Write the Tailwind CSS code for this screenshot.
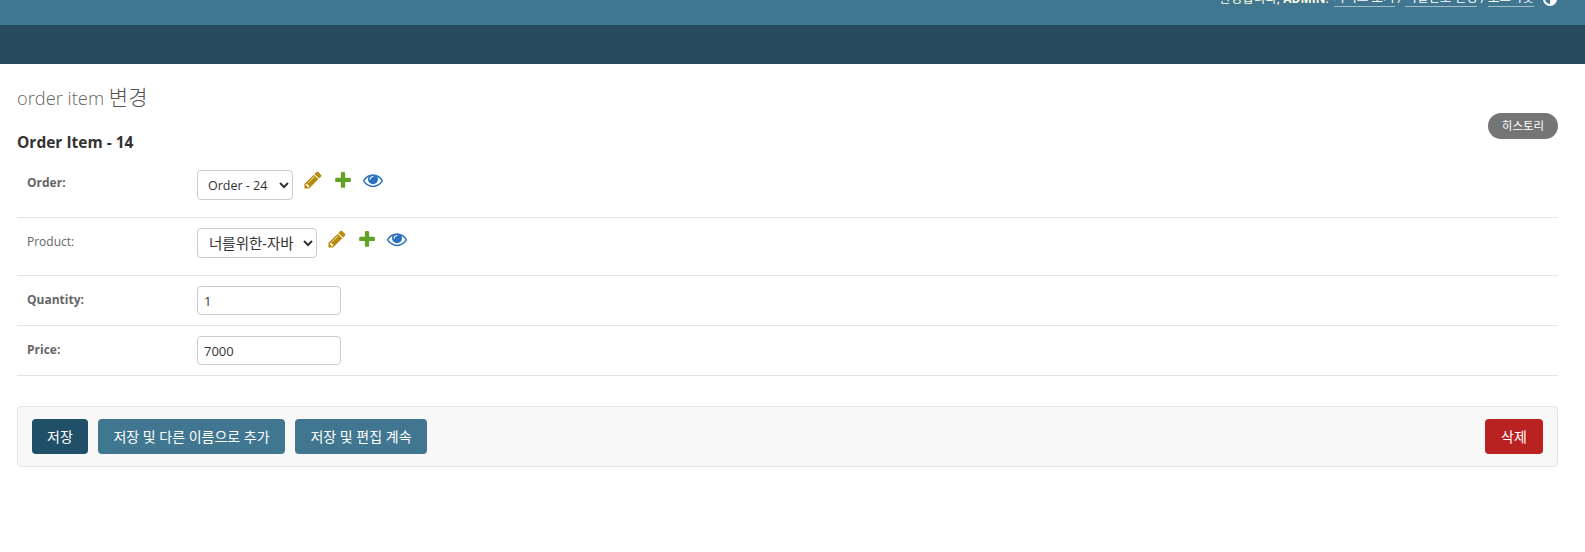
<!DOCTYPE html>
<html lang="ko">
  <head>
    <meta charset="UTF-8" />
    <title>order item 변경</title>
    <script src="https://cdn.jsdelivr.net/npm/@tailwindcss/browser@4"></script>
  </head>
  <body class="bg-white font-['Open_Sans','Noto_Sans_CJK_KR',sans-serif] text-[13px] text-[#333]">
    <!-- header -->
    <div class="h-[25px] bg-[#417690] overflow-hidden flex justify-end items-end pb-[18px] pr-[28px] text-[12.5px] leading-[16px] text-[#fdfbe0]">
      <div class="flex items-end">
        <span>환영합니다, <strong class="font-bold text-[12px]">ADMIN</strong>.</span>
        <a class="ml-[5px] text-white border-b border-white/50">사이트 보기</a>
        <span class="mx-[3px] text-white">/</span>
        <a class="text-white border-b border-white/50">비밀번호 변경</a>
        <span class="mx-[3px] text-white">/</span>
        <a class="text-white border-b border-white/50">로그아웃</a>
        <span class="ml-[9px] mb-[1px] w-[14px] h-[14px] rounded-full border-2 border-white bg-[linear-gradient(90deg,#417690_50%,#fff_50%)]"></span>
      </div>
    </div>
    <div class="h-[39px] bg-[#264b5d]"></div>

    <div class="pl-[17px] pr-[27px]">
      <div class="flex justify-between items-start">
        <div class="pb-[9px]">
          <h1 class="mt-[20px] h-[28px] text-[18.3px] leading-[28px] font-light text-[#666]">order item <span class="text-[21px] leading-none text-[#555]">변경</span></h1>
          <h2 class="mt-[20px] text-[15.5px] leading-[20px] font-bold text-[#333]">Order Item - 14</h2>
        </div>
        <a class="mt-[49px] h-[26px] w-[70px] rounded-full bg-[#757575] text-white text-[11.5px] flex items-center justify-center">히스토리</a>
      </div>

      <!-- form rows -->
      <div class="flex border-b border-[#e5e5e5] pt-[9px] h-[57px]">
        <label class="w-[180px] pl-[10px] pt-[3px] font-bold text-[12px] leading-[20px] text-[#666]">Order:</label>
        <select class="w-[96px] h-[30px] pl-[6px] bg-white border border-[#ccc] rounded text-[12.5px] text-[#333]">
          <option>Order - 24</option>
        </select>
        <div class="flex gap-[10px] h-[20px] ml-[10px] items-center">
          <svg class="w-[20px] h-[20px]" viewBox="0 0 1792 1792"><path fill="#b98b0c" d="M491 1536l91-91-235-235-91 91v107h128v128h107zm523-928q0-22-22-22-10 0-17 7l-542 542q-7 7-7 17 0 22 22 22 10 0 17-7l542-542q7-7 7-17zm-54-192l416 416-832 832h-416v-416zm683 96q0 53-37 90l-166 166-416-416 166-165q36-38 90-38 53 0 91 38l235 234q37 39 37 91z"/></svg>
          <svg class="w-[20px] h-[20px]" viewBox="0 0 1792 1792"><path fill="#5fa225" d="M1600 796v192q0 40-28 68t-68 28h-416v416q0 40-28 68t-68 28h-192q-40 0-68-28t-28-68v-416h-416q-40 0-68-28t-28-68v-192q0-40 28-68t68-28h416v-416q0-40 28-68t68-28h192q40 0 68 28t28 68v416h416q40 0 68 28t28 68z"/></svg>
          <svg class="w-[20px] h-[20px]" viewBox="0 0 1792 1792"><path fill="#2b70bf" d="M1664 960q-152-236-381-353 61 104 61 225 0 185-131.500 316.500t-316.500 131.500-316.500-131.500-131.500-316.500q0-121 61-225-229 117-381 353 133 205 333.500 326.500t434.500 121.500 434.500-121.500 333.500-326.500zm-720-384q0-20-14-34t-34-14q-125 0-214.500 89.500t-89.500 214.500q0 20 14 34t34 14 34-14 14-34q0-86 61-147t147-61q20 0 34-14t14-34zm848 384q0 34-20 69-140 230-376.500 368.500t-499.500 138.500-499.500-139-376.500-368q-20-35-20-69t20-69q140-229 376.500-368t499.500-139 499.500 139 376.500 368q20 35 20 69z"/></svg>
        </div>
      </div>
      <div class="flex border-b border-[#e5e5e5] pt-[10px] h-[58px]">
        <label class="w-[180px] pl-[10px] pt-[4px] text-[12px] leading-[20px] text-[#666]">Product:</label>
        <select class="w-[120px] h-[30px] pl-[7px] bg-white border border-[#ccc] rounded text-[14.5px] text-[#333]">
          <option>너를위한-자바</option>
        </select>
        <div class="flex gap-[10px] h-[20px] mt-[1px] ml-[10px] items-center">
          <svg class="w-[20px] h-[20px]" viewBox="0 0 1792 1792"><path fill="#b98b0c" d="M491 1536l91-91-235-235-91 91v107h128v128h107zm523-928q0-22-22-22-10 0-17 7l-542 542q-7 7-7 17 0 22 22 22 10 0 17-7l542-542q7-7 7-17zm-54-192l416 416-832 832h-416v-416zm683 96q0 53-37 90l-166 166-416-416 166-165q36-38 90-38 53 0 91 38l235 234q37 39 37 91z"/></svg>
          <svg class="w-[20px] h-[20px]" viewBox="0 0 1792 1792"><path fill="#5fa225" d="M1600 796v192q0 40-28 68t-68 28h-416v416q0 40-28 68t-68 28h-192q-40 0-68-28t-28-68v-416h-416q-40 0-68-28t-28-68v-192q0-40 28-68t68-28h416v-416q0-40 28-68t68-28h192q40 0 68 28t28 68v416h416q40 0 68 28t28 68z"/></svg>
          <svg class="w-[20px] h-[20px]" viewBox="0 0 1792 1792"><path fill="#2b70bf" d="M1664 960q-152-236-381-353 61 104 61 225 0 185-131.500 316.500t-316.500 131.500-316.500-131.500-131.500-316.500q0-121 61-225-229 117-381 353 133 205 333.500 326.500t434.500 121.500 434.500-121.500 333.500-326.500zm-720-384q0-20-14-34t-34-14q-125 0-214.500 89.500t-89.500 214.500q0 20 14 34t34 14 34-14 14-34q0-86 61-147t147-61q20 0 34-14t14-34zm848 384q0 34-20 69-140 230-376.500 368.500t-499.500 138.500-499.500-139-376.500-368q-20-35-20-69t20-69q140-229 376.500-368t499.500-139 499.500 139 376.500 368q20 35 20 69z"/></svg>
        </div>
      </div>
      <div class="flex border-b border-[#e5e5e5] pt-[10px] h-[50px]">
        <label class="w-[180px] pl-[10px] pt-[4px] font-bold text-[12px] leading-[20px] text-[#666]">Quantity:</label>
        <input value="1" class="w-[144px] h-[29px] px-[6px] border border-[#ccc] rounded text-[13px] text-[#333]" />
      </div>
      <div class="flex border-b border-[#e5e5e5] pt-[10px] h-[50px]">
        <label class="w-[180px] pl-[10px] pt-[4px] font-bold text-[12px] leading-[20px] text-[#666]">Price:</label>
        <input value="7000" class="w-[144px] h-[29px] px-[6px] border border-[#ccc] rounded text-[13px] text-[#333]" />
      </div>

      <!-- submit row -->
      <div class="mt-[30px] h-[61px] flex items-center justify-between px-[14px] bg-[#f8f8f8] border border-[#e5e5e5] rounded">
        <div class="flex gap-[10px]">
          <button class="h-[35px] w-[56px] rounded bg-[#205067] text-white text-[14px]">저장</button>
          <button class="h-[35px] w-[187px] rounded bg-[#417690] text-white text-[14px]">저장 및 다른 이름으로 추가</button>
          <button class="h-[35px] w-[132px] rounded bg-[#417690] text-white text-[14px]">저장 및 편집 계속</button>
        </div>
        <button class="h-[35px] w-[58px] rounded bg-[#ba2121] text-white text-[14px]">삭제</button>
      </div>
    </div>
  </body>
</html>
